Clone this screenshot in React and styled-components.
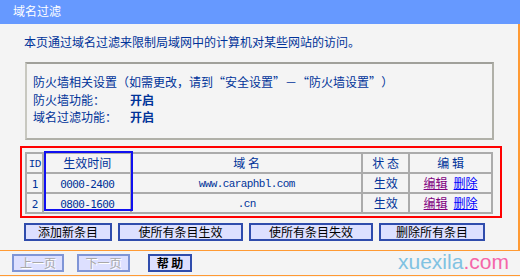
import React from "react";
import styled, { createGlobalStyle } from "styled-components";

const GlobalStyle = createGlobalStyle`
  html, body {
    margin: 0;
    padding: 0;
    background: #f4f4f4;
  }
  body {
    font-family: "Noto Sans CJK SC", "Noto Sans", sans-serif;
    font-size: 12px;
    color: #003399;
  }
  * { box-sizing: border-box; }
`;

const Page = styled.div`
  width: 520px;
  height: 277px;
  background: #f4f4f4;
  overflow: hidden;
`;

const Header = styled.div`
  height: 24px;
  background: #6699ff;
  color: #ffffff;
  font-size: 12px;
  line-height: 22px;
  padding-left: 13px;
`;

const Main = styled.div`
  height: 227px;
  border-right: 2px solid #ff9a33;
  border-bottom: 1px solid #ff9a33;
  display: flex;
  flex-direction: column;
`;

const Intro = styled.p`
  margin: 9px 0 0 24px;
  line-height: 18px;
`;

const InfoBox = styled.div`
  margin: 11px 0 0 25px;
  width: 469px;
  border: 2px solid #b0b0a8;
  border-top-color: #a0a09a;
  border-left-color: #c8c8c0;
  padding: 9px 6px 12px;
`;

const InfoRow = styled.div`
  display: flex;
  line-height: 17.5px;
  white-space: nowrap;
`;

const InfoLabel = styled.span`
  width: 97px;
  flex: none;
`;

const InfoValue = styled.span`
  font-weight: 700;
`;

const Quote = styled.span`
  font-feature-settings: "fwid";
`;

const Highlight = styled.div`
  position: relative;
  margin: 6px 0 0 20px;
  width: 482px;
  border: 2px solid #ff0000;
  padding: 4px 7px 2px 3px;
`;

const Marker = styled.div`
  position: absolute;
  left: 22px;
  top: 3px;
  width: 89px;
  height: 60px;
  border: 2px solid #1010f0;
  pointer-events: none;
`;

const Table = styled.table`
  border-collapse: separate;
  border-spacing: 0;
  table-layout: fixed;
  width: 468px;
  border-top: 2px solid #ababab;
  border-left: 2px solid #ababab;
`;

const Row = styled.tr`
  height: 20px;
`;

const Cell = styled.td`
  padding: 0;
  height: 18px;
  max-height: 18px;
  border-right: 2px solid #ababab;
  border-bottom: 2px solid #ababab;
  text-align: center;
  vertical-align: middle;
  line-height: 14px;
  white-space: nowrap;
  overflow: hidden;
  color: #003399;
  width: ${(p) => (p.$w ? `${p.$w}px` : "auto")};
`;

const Mono = styled.span`
  font-family: "Liberation Mono", monospace;
  font-size: 11px;
  line-height: 1;
  letter-spacing: -0.6px;
`;

const Digits = styled.span`
  font-family: "DejaVu Sans Mono", monospace;
  font-size: 11px;
  line-height: 1;
  letter-spacing: -0.6px;
`;

const Link = styled.a`
  color: ${(p) => (p.$visited ? "#800080" : "#0000ff")};
  text-decoration: underline;
  cursor: pointer;
`;

const LinkGroup = styled.span`
  display: inline-flex;
  gap: 6px;
  line-height: 14px;
`;

const ButtonRow = styled.div`
  display: flex;
  gap: 6px;
  margin: 5px 0 0 24px;
`;

const Button = styled.button`
  width: ${(p) => p.$w}px;
  height: 18px;
  padding: 0;
  margin: 0;
  background: #dde0ff;
  border: 2px solid ${(p) => (p.disabled ? "#7f95d6" : "#2f4cac")};
  font-family: "Noto Sans CJK SC", sans-serif;
  font-size: 12px;
  line-height: 14px;
  font-weight: ${(p) => (p.$bold ? 700 : 400)};
  color: ${(p) => (p.disabled ? "#a8a8a8" : "#000000")};
  text-shadow: ${(p) => (p.disabled ? "1px 1px 0 #ffffff" : "none")};
  white-space: pre;
  cursor: pointer;
`;

const Footer = styled.div`
  position: relative;
  height: 25px;
  border-bottom: 1px solid #ff9a33;
  display: flex;
  padding: 3px 0 0 12px;
`;

const FooterButtons = styled.div`
  display: flex;
  gap: 13px;
  & > :last-child {
    margin-left: 5px;
  }
`;

const Watermark = styled.div`
  position: absolute;
  left: 398px;
  top: 0;
  font-family: "Liberation Sans", Arial, sans-serif;
  font-size: 21px;
  line-height: 21px;
  color: #80c2e2;
  pointer-events: none;
`;

const Pink = styled.span`
  color: #f466a9;
`;

const rows = [
  { id: "1", time: "0000-2400", domain: "www.caraphbl.com", status: "生效" },
  { id: "2", time: "0800-1600", domain: ".cn", status: "生效" },
];

export default function App() {
  return (
    <Page>
      <GlobalStyle />
      <Header>域名过滤</Header>
      <Main>
        <Intro>本页通过域名过滤来限制局域网中的计算机对某些网站的访问。</Intro>
        <InfoBox>
          <InfoRow>
            防火墙相关设置（如需更改，请到<Quote>“</Quote>安全设置<Quote>”</Quote>－<Quote>“</Quote>防火墙设置<Quote>”</Quote>）
          </InfoRow>
          <InfoRow>
            <InfoLabel>防火墙功能：</InfoLabel>
            <InfoValue>开启</InfoValue>
          </InfoRow>
          <InfoRow>
            <InfoLabel>域名过滤功能：</InfoLabel>
            <InfoValue>开启</InfoValue>
          </InfoRow>
        </InfoBox>
        <Highlight>
          <Table>
            <tbody>
              <Row>
                <Cell $w={17}><Mono>ID</Mono></Cell>
                <Cell $w={86}>生效时间</Cell>
                <Cell $w={226}>域 名</Cell>
                <Cell $w={46}>状 态</Cell>
                <Cell $w={81}>编 辑</Cell>
              </Row>
              {rows.map((r) => (
                <Row key={r.id}>
                  <Cell><Digits>{r.id}</Digits></Cell>
                  <Cell><Digits>{r.time}</Digits></Cell>
                  <Cell><Mono>{r.domain}</Mono></Cell>
                  <Cell>{r.status}</Cell>
                  <Cell>
                    <LinkGroup>
                      <Link $visited>编辑</Link>
                      <Link>删除</Link>
                    </LinkGroup>
                  </Cell>
                </Row>
              ))}
            </tbody>
          </Table>
          <Marker />
        </Highlight>
        <ButtonRow>
          <Button $w={88}>添加新条目</Button>
          <Button $w={125}>使所有条目生效</Button>
          <Button $w={124}>使所有条目失效</Button>
          <Button $w={106}>删除所有条目</Button>
        </ButtonRow>
      </Main>
      <Footer>
        <FooterButtons>
          <Button $w={52} disabled>上一页</Button>
          <Button $w={53} disabled>下一页</Button>
          <Button $w={44} $bold>{"帮 助"}</Button>
        </FooterButtons>
        <Watermark>
          xuexila<Pink>.com</Pink>
        </Watermark>
      </Footer>
    </Page>
  );
}
